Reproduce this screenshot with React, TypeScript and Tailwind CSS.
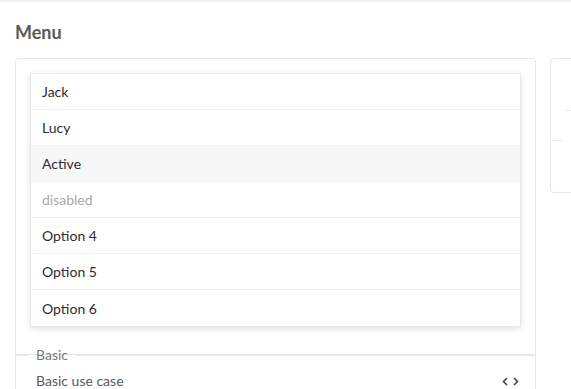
import React from 'react';

const items = [
  { label: 'Jack' },
  { label: 'Lucy' },
  { label: 'Active', active: true },
  { label: 'disabled', disabled: true },
  { label: 'Option 4' },
  { label: 'Option 5' },
  { label: 'Option 6' },
];

function CodeIcon() {
  return (
    <svg width="17" height="9" viewBox="0 0 17 9" fill="none" stroke="#444" strokeWidth="1.6">
      <path d="M5 1 L1.5 4.5 L5 8" />
      <path d="M12 1 L15.5 4.5 L12 8" />
    </svg>
  );
}

function Divider({ title }: { title: string }) {
  return (
    <div className="flex items-center h-0">
      <div className="w-[12px] border-t border-[#e8e8e8]" />
      <span className="px-2 text-[14px] leading-[20px] text-[#777] whitespace-nowrap">{title}</span>
      <div className="flex-1 border-t border-[#e8e8e8]" />
    </div>
  );
}

export default function App() {
  return (
    <div className="w-[571px] h-[389px] overflow-hidden bg-white border-t-2 border-[#f0f0f0] font-['Lato','Noto_Sans',sans-serif]">
      <div className="pl-[15px]">
        <h2 className="mt-[18px] text-[18px] leading-[24px] font-bold text-[#595959]">Menu</h2>

        <div className="flex items-start gap-[14px] mt-[14px]">
          {/* Demo card */}
          <div className="w-[521px] shrink-0 border border-[#e8e8e8] rounded-[4px]">
            <div className="pt-[14px] px-[14px] pb-[27px]">
              <ul className="border border-[#e8e8e8] shadow-[0_2px_6px_rgba(0,0,0,0.12)] bg-white">
                {items.map((item, i) => (
                  <li
                    key={item.label}
                    className={`h-[36px] flex items-center px-[11px] text-[14px] ${
                      i < items.length - 1 ? 'border-b border-[#f3f3f3]' : ''
                    } ${item.active ? 'bg-[#f7f7f7]' : ''} ${
                      item.disabled ? 'text-[#a8a8a8]' : 'text-[#2b2b33]'
                    }`}
                  >
                    {item.label}
                  </li>
                ))}
              </ul>
            </div>
            <div className="border-t border-[#e8e8e8]">
              <Divider title="Basic" />
              <div className="flex items-center justify-between pt-[15px] pl-[20px] pr-[16px]">
                <span className="text-[14px] leading-[22px] text-[#595959]">Basic use case</span>
                <CodeIcon />
              </div>
            </div>
          </div>

          {/* Next card (clipped) */}
          <div className="w-[300px] shrink-0 h-[135px] border border-[#e8e8e8] rounded-[4px] flex flex-col">
            <div className="pt-[14px] pl-[14px] h-[81px]">
              <div className="h-[38px] border-b border-[#e8e8e8]" />
            </div>
            <div className="border-t border-[#e8e8e8] w-[12px]" />
          </div>
        </div>
      </div>
    </div>
  );
}
